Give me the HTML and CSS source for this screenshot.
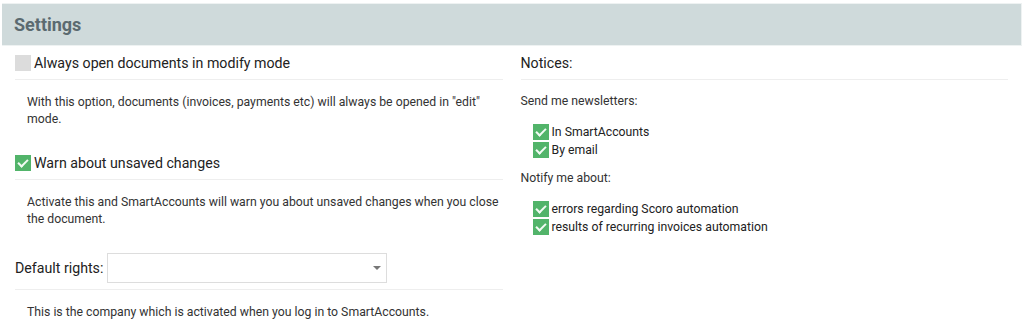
FILE: index.html
```html
<!DOCTYPE html>
<html lang="en">
<head>
  <meta charset="UTF-8">
  <title>Settings</title>
  <link rel="stylesheet" href="styles.css">
</head>
<body>

  <div class="header">
    <h1>Settings</h1>
  </div>

  <div class="columns">
    <div class="col">

      <div class="row">
        <span class="box"></span>
        <span class="title">Always open documents in modify mode</span>
      </div>
      <p class="desc">With this option, documents (invoices, payments etc) will always be opened in "edit" mode.</p>

      <div class="row">
        <span class="box checked"></span>
        <span class="title">Warn about unsaved changes</span>
      </div>
      <p class="desc">Activate this and SmartAccounts will warn you about unsaved changes when you close the document.</p>

      <div class="row select-row">
        <label class="title">Default rights:</label>
        <div class="select"><span class="arrow"></span></div>
      </div>
      <p class="desc">This is the company which is activated when you log in to SmartAccounts.</p>

    </div>

    <div class="col">
      <div class="row">
        <span class="title notices">Notices:</span>
      </div>

      <p class="label">Send me newsletters:</p>
      <ul class="checks">
        <li><span class="box checked"></span>In SmartAccounts</li>
        <li><span class="box checked"></span>By email</li>
      </ul>

      <p class="label">Notify me about:</p>
      <ul class="checks">
        <li><span class="box checked"></span>errors regarding Scoro automation</li>
        <li><span class="box checked"></span>results of recurring invoices automation</li>
      </ul>
    </div>
  </div>

</body>
</html>
```

FILE: styles.css
```css
body
{
  margin:0;
  font-family:Roboto, "Liberation Sans", sans-serif;
  color:#222;
  background-color:#fff;
}

div.header
{
  margin:3px 2px 0 2px;
  height:41px;
  background-color:#cfdadb;
  border:1px solid #eef2f2;
  border-width:1px 1px 1px 0;
  display:flex;
  align-items:center;
}

div.header h1
{
  margin:0 0 0 12px;
  font-size:18px;
  font-weight:bold;
  color:#5b6a70;
}

div.columns
{
  display:flex;
  gap:18px;
  padding:0 16px 0 15px;
}

div.col
{
  flex:1;
}

div.row
{
  display:flex;
  align-items:center;
  gap:3px;
  padding:9px 0 8px 0;
  min-height:16px;
  border-bottom:1px solid #eee;
}

div.select-row
{
  padding:7px 0 6px 0;
  gap:4px;
}

span.title, label.title
{
  font-size:14.2px;
  line-height:16px;
  color:#222;
}

span.box
{
  display:inline-block;
  width:16px;
  height:16px;
  background-color:#dcdcdc;
  flex:none;
  position:relative;
}

span.box.checked
{
  background-color:#52b46a;
}

span.box.checked::after
{
  content:"";
  position:absolute;
  left:5px;
  top:2px;
  width:4px;
  height:8px;
  border-right:2px solid #f2fbf4;
  border-bottom:2px solid #f2fbf4;
  transform:rotate(45deg);
}

p.desc
{
  margin:14px 0 18px 0;
  padding-left:12px;
  font-size:12.25px;
  line-height:17px;
  color:#333;
}

p.desc:last-child
{
  margin-bottom:0;
}

div.select
{
  width:278px;
  height:28px;
  border:1px solid #ddd;
  position:relative;
}

span.arrow
{
  position:absolute;
  right:5px;
  top:12px;
  border-left:4px solid transparent;
  border-right:4px solid transparent;
  border-top:4px solid #777;
}

p.label
{
  margin:0 0 13px 0;
  font-size:12.25px;
  line-height:17px;
  color:#333;
}

div.row + p.label
{
  margin-top:13px;
}

ul.checks
{
  list-style:none;
  margin:0 0 11px 0;
  padding-left:12px;
  font-size:12.25px;
  line-height:18px;
  color:#222;
}

ul.checks li
{
  display:flex;
  align-items:center;
  gap:3px;
}
```
